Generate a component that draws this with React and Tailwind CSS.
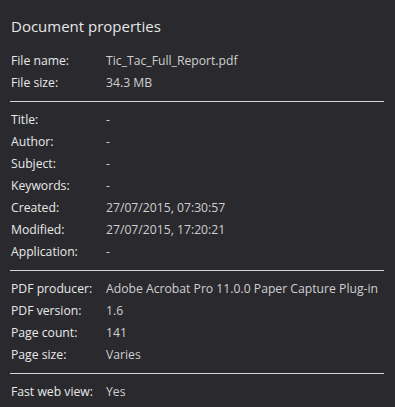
import React from "react"

const groups = [
  [
    ["File name:", "Tic_Tac_Full_Report.pdf"],
    ["File size:", "34.3 MB"],
  ],
  [
    ["Title:", "-"],
    ["Author:", "-"],
    ["Subject:", "-"],
    ["Keywords:", "-"],
    ["Created:", "27/07/2015, 07:30:57"],
    ["Modified:", "27/07/2015, 17:20:21"],
    ["Application:", "-"],
  ],
  [
    ["PDF producer:", "Adobe Acrobat Pro 11.0.0 Paper Capture Plug-in"],
    ["PDF version:", "1.6"],
    ["Page count:", "141"],
    ["Page size:", "Varies"],
  ],
  [["Fast web view:", "Yes"]],
]

export default function App() {
  return (
    <div
      className="w-[395px] h-[407px] bg-[#2a2a2e] pl-[10px] pr-[11px] pt-[14px] overflow-hidden"
      style={{ fontFamily: '"Open Sans", "Noto Sans", sans-serif' }}
    >
      <h1 className="text-[15px] leading-[24px] text-[#e6e6e6] pl-[1px] mb-[12px]">
        Document properties
      </h1>
      {groups.map((group, gi) => (
        <div key={gi}>
          {gi > 0 && <div className="h-px bg-[#d4d4d4] my-[7px]" />}
          {group.map(([label, value]) => (
            <div key={label} className="flex h-[22px] items-center text-[12.2px] pl-[1px]">
              <span className="w-[95px] shrink-0 text-[#e8e8e8]">{label}</span>
              <span className="text-[#cfcfcf] whitespace-nowrap">{value}</span>
            </div>
          ))}
        </div>
      ))}
    </div>
  )
}
